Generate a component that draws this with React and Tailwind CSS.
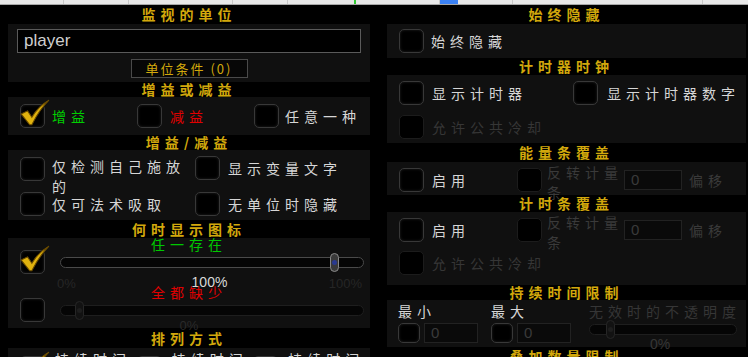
import React from 'react';

const cjk = "font-['Noto_Sans_CJK_SC',sans-serif]";

// gold header above each panel
const Header = ({ children, className = '' }) => (
  <div className={`shrink-0 flex items-center justify-center text-[14px] font-bold tracking-[5px] text-[#d2a80c] ${cjk} ${className}`}>
    {children}
  </div>
);

const Panel = ({ children, className = '' }) => (
  <div className={`shrink-0 bg-[#101010] ${className}`}>{children}</div>
);

const Box = ({ checked = false, dim = false, size = 'w-[25px] h-[24px]' }) => (
  <div
    className={`relative shrink-0 ${size} rounded-[5px] border bg-black ${
      dim ? 'border-[#1c1c1c]' : 'border-[#383838] shadow-[inset_0_0_3px_#222]'
    }`}
  >
    {checked && (
      <svg viewBox="0 0 30 26" className="absolute -left-[3px] -top-[6px] w-[32px] h-[28px]">
        <path
          d="M3 14 L9 11 L13 17 C17 10 22 5 29 1 C23 7 18 14 13 24 L11 24 Z"
          fill="#e0b20e"
          stroke="#6b4c00"
          strokeWidth="1"
        />
      </svg>
    )}
  </div>
);

const Label = ({ children, color = 'text-[#d6d6d6]', className = '' }) => (
  <span className={`text-[14px] leading-[20px] tracking-[5px] ${color} ${cjk} ${className}`}>{children}</span>
);

const Slider = ({ pos, dim = false }) => (
  <div className={`relative h-[11px] flex-1 rounded-full border ${dim ? 'border-[#1e1e1e]' : 'border-[#4a4a4a]'} bg-[#050505]`}>
    <div
      className={`absolute -top-[5px] w-[9px] h-[19px] rounded-full border ${
        dim ? 'border-[#262626] bg-[#121212]' : 'border-[#8a8a8a] bg-[#3a3a3a]'
      } flex items-center justify-center`}
      style={{ left: pos }}
    >
      <div className={`w-[5px] h-[5px] rounded-full ${dim ? 'bg-[#1e1e1e]' : 'bg-[#2a3a90]'}`} />
    </div>
  </div>
);

const NumBox = ({ w = 'w-[58px]', h = 'h-[20px]' }) => (
  <div className={`${w} ${h} border border-[#222] bg-[#0a0a0a] flex items-center px-[6px] text-[15px] text-[#3a3a3a] font-['Liberation_Sans',sans-serif]`}>
    0
  </div>
);

const TopStrip = () => (
  <div className="h-[5px] bg-[#e8e8e8] border-b border-[#a8a8a8] flex">
    <div className="w-[64px] border-r border-[#c8c8c8]" />
    <div className="w-[65px] border-r border-[#c8c8c8]" />
    <div className="w-[104px] border-r border-[#c8c8c8]" />
    <div className="w-[55px] border-r border-[#c8c8c8]" />
    <div className="w-[66px]" />
    <div className="w-[2px] bg-[#3c3]" />
    <div className="w-[20px]" />
    <div className="w-[64px] border-r border-[#c8c8c8]" />
    <div className="w-[18px] bg-[#3b82f6]" />
    <div className="w-[55px] border-r border-[#c8c8c8]" />
    <div className="w-[190px] border-r border-[#c8c8c8]" />
  </div>
);

const LeftColumn = () => (
  <div className="w-[362px] ml-[8px] flex flex-col">
    <Header className="h-[19px]">监视的单位</Header>
    <Panel className="h-[58px] flex flex-col items-center pt-[5px]">
      <div className="w-[344px] h-[24px] border border-[#5a5a5a] bg-black flex items-center px-[6px] text-[17px] text-[#cfcfcf] font-['Liberation_Sans',sans-serif]">
        player
      </div>
      <div className={`mt-[6px] w-[117px] h-[19px] border border-[#4a4a4a] bg-[#070707] flex items-center justify-center text-[13px] tracking-[2px] text-[#d2a80c] ${cjk}`}>
        单位条件 (0)
      </div>
    </Panel>
    <Header className="h-[15px]">增益或减益</Header>
    <Panel className="h-[38px] flex items-center pl-[12px]">
      <div className="w-[117px] flex items-center gap-[7px]">
        <Box checked />
        <Label color="text-[#00d000]">增益</Label>
      </div>
      <div className="w-[117px] flex items-center gap-[8px]">
        <Box />
        <Label color="text-[#e00000]">减益</Label>
      </div>
      <div className="flex items-center gap-[6px]">
        <Box />
        <Label>任意一种</Label>
      </div>
    </Panel>
    <Header className="h-[15px]">增益/减益</Header>
    <Panel className="h-[70px] flex flex-col pl-[12px] pt-[6px]">
      <div className="flex items-start h-[36px]">
        <div className="w-[175px] flex items-start gap-[7px]">
          <div className="mt-[1px]"><Box /></div>
          <Label className="w-[142px] leading-[19px]">仅检测自己施放的</Label>
        </div>
        <div className="flex items-center gap-[8px]">
          <Box />
          <Label>显示变量文字</Label>
        </div>
      </div>
      <div className="flex items-center h-[24px]">
        <div className="w-[175px] flex items-center gap-[7px]">
          <Box />
          <Label>仅可法术吸取</Label>
        </div>
        <div className="flex items-center gap-[8px]">
          <Box />
          <Label>无单位时隐藏</Label>
        </div>
      </div>
    </Panel>
    <Header className="h-[18px]">何时显示图标</Header>
    <Panel className="h-[90px] flex flex-col">
      <div className={`h-[12px] flex items-center justify-center text-[14px] tracking-[5px] text-[#00c800] ${cjk}`}>任一存在</div>
      <div className="h-[24px] flex items-center pl-[12px] pr-[6px] gap-[15px]">
        <Box checked />
        <Slider pos="269px" />
      </div>
      <div className="h-[12px] grid grid-cols-3 items-center pl-[49px] pr-[8px] font-['Liberation_Sans',sans-serif]">
        <span className="text-[13px] text-[#262626]">0%</span>
        <span className="text-[14px] text-center text-[#d8d8d8] -mt-[2px]">100%</span>
        <span className="text-[13px] text-right text-[#262626]">100%</span>
      </div>
      <div className={`h-[12px] flex items-center justify-center text-[14px] tracking-[5px] text-[#e00000] ${cjk}`}>全都缺少</div>
      <div className="h-[24px] flex items-center pl-[12px] pr-[6px] gap-[15px]">
        <Box />
        <Slider pos="14px" dim />
      </div>
      <div className="h-[6px] flex items-center justify-center text-[13px] leading-none text-[#2a2a2a] font-['Liberation_Sans',sans-serif]">0%</div>
    </Panel>
    <Header className="h-[20px]">排列方式</Header>
    <Panel className="h-[40px] flex items-start pl-[12px] pt-[1px]">
      {['持续时间', '持续时间', '持续时间'].map((t, i) => (
        <div key={i} className="w-[117px] flex items-start gap-[10px]">
          <div className="mt-[7px]"><Box checked={i === 0} /></div>
          <Label>{t}</Label>
        </div>
      ))}
    </Panel>
  </div>
);

const OverlayRow = () => (
  <div className="flex items-start pl-[12px]">
    <div className="w-[118px] flex items-center gap-[8px] mt-[6px]">
      <Box />
      <Label>启用</Label>
    </div>
    <div className="flex items-start gap-[5px]">
      <div className="mt-[6px]"><Box dim /></div>
      <Label color="text-[#3a3a3a]" className="w-[76px] leading-[20px]">反转计量条</Label>
    </div>
    <div className="mt-[8px] ml-[1px]"><NumBox /></div>
    <Label color="text-[#3a3a3a]" className="ml-[7px] mt-[8px]">偏移</Label>
  </div>
);

const RightColumn = () => (
  <div className="w-[359px] ml-[17px] flex flex-col">
    <Header className="h-[19px]">始终隐藏</Header>
    <Panel className="h-[34px] flex items-center pl-[12px] gap-[7px]">
      <Box />
      <Label>始终隐藏</Label>
    </Panel>
    <Header className="h-[17px]">计时器时钟</Header>
    <Panel className="h-[68px] flex flex-col pl-[12px] pt-[6px]">
      <div className="h-[24px] flex items-center">
        <div className="w-[174px] flex items-center gap-[8px]">
          <Box />
          <Label>显示计时器</Label>
        </div>
        <div className="flex items-center gap-[9px]">
          <Box />
          <Label>显示计时器数字</Label>
        </div>
      </div>
      <div className="h-[24px] mt-[10px] flex items-center gap-[8px]">
        <Box dim />
        <Label color="text-[#363636]">允许公共冷却</Label>
      </div>
    </Panel>
    <Header className="h-[19px]">能量条覆盖</Header>
    <Panel className="h-[33px]">
      <OverlayRow />
    </Panel>
    <Header className="h-[17px]">计时条覆盖</Header>
    <Panel className="h-[73px] flex flex-col">
      <OverlayRow />
      <div className="flex items-center gap-[8px] pl-[12px] -mt-[1px]">
        <Box dim />
        <Label color="text-[#363636]">允许公共冷却</Label>
      </div>
    </Panel>
    <Header className="h-[15px]">持续时间限制</Header>
    <Panel className="h-[47px] flex pl-[11px] pt-[1px]">
      <div className="w-[93px] flex flex-col">
        <Label className="leading-[17px]">最小</Label>
        <div className="flex items-center gap-[4px] mt-[2px]">
          <Box size="w-[22px] h-[20px]" />
          <NumBox w="w-[54px]" h="h-[20px]" />
        </div>
      </div>
      <div className="w-[98px] flex flex-col">
        <Label className="leading-[17px]">最大</Label>
        <div className="flex items-center gap-[4px] mt-[2px]">
          <Box size="w-[22px] h-[20px]" />
          <NumBox w="w-[54px]" h="h-[20px]" />
        </div>
      </div>
      <div className="flex flex-col w-[150px]">
        <Label color="text-[#363636]" className="leading-[17px] tracking-[4px] whitespace-nowrap">无效时的不透明度</Label>
        <div className="flex mt-[3px] pr-[2px]">
          <Slider pos="16px" dim />
        </div>
        <div className="text-center text-[14px] leading-[12px] text-[#363636] mt-[3px] -ml-[8px] font-['Liberation_Sans',sans-serif]">0%</div>
      </div>
    </Panel>
    <Header className="h-[18px]">叠加数量限制</Header>
  </div>
);

export default function App() {
  return (
    <div className="w-[748px] h-[357px] overflow-hidden bg-black">
      <TopStrip />
      <div className="flex items-start">
        <LeftColumn />
        <RightColumn />
      </div>
    </div>
  );
}
